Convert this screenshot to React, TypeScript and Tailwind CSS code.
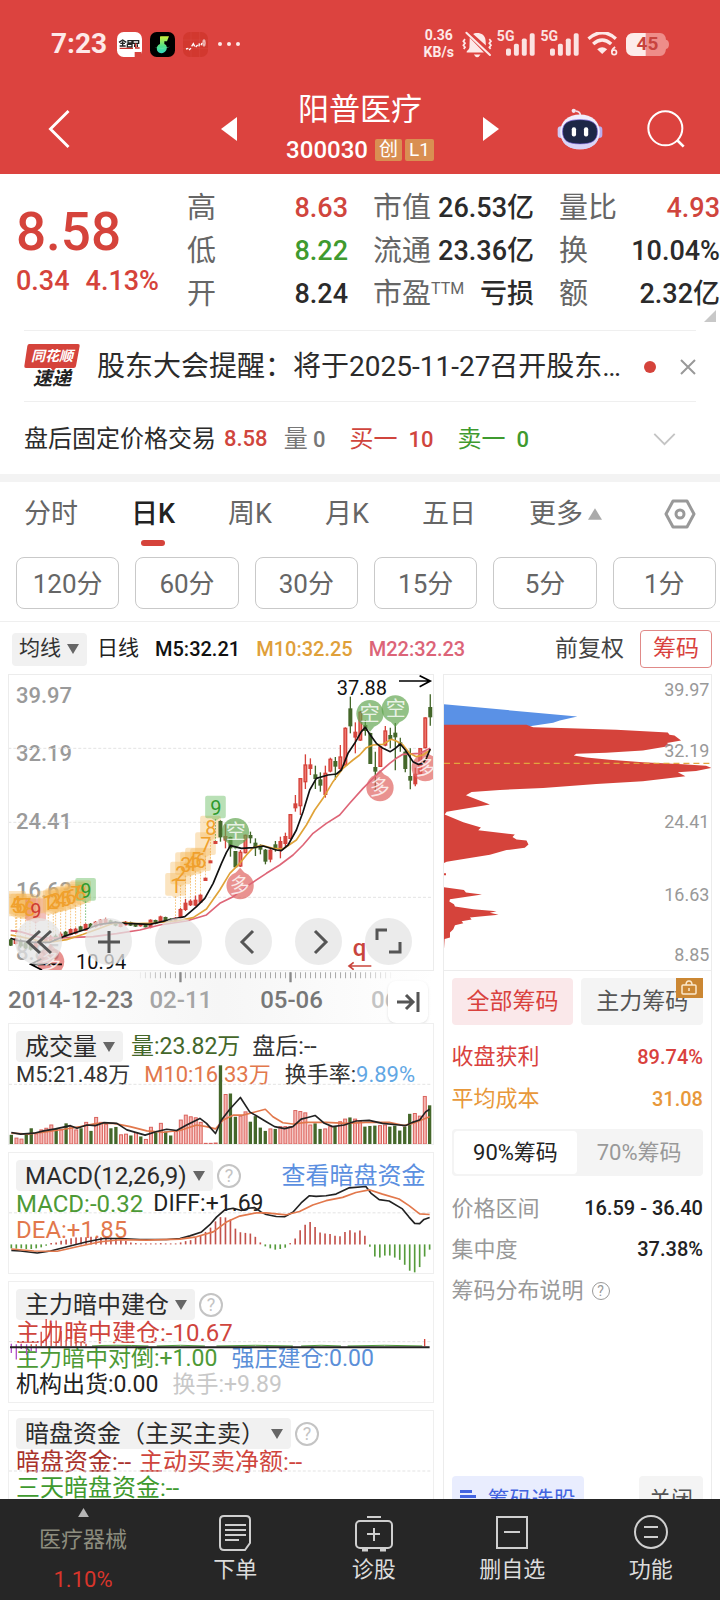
import React from 'react';

const UP = '#d5433b';
const DOWN = '#44672a';

const quotes = [
  { label: '高', value: '8.63', color: 'text-[#d0453d]' },
  { label: '市值', value: '26.53亿', color: 'text-[#2b2b2b]' },
  { label: '量比', value: '4.93', color: 'text-[#d0453d]' },
  { label: '低', value: '8.22', color: 'text-[#3f9a2f]' },
  { label: '流通', value: '23.36亿', color: 'text-[#2b2b2b]' },
  { label: '换', value: '10.04%', color: 'text-[#2b2b2b]' },
  { label: '开', value: '8.24', color: 'text-[#2b2b2b]' },
  { label: '市盈', sup: 'TTM', value: '亏损', color: 'text-[#2b2b2b]' },
  { label: '额', value: '2.32亿', color: 'text-[#2b2b2b]' },
];

const periods = ['分时', '日K', '周K', '月K', '五日'];
const minutes = ['120分', '60分', '30分', '15分', '5分', '1分'];

// [up, wick top, body top, body bottom, wick bottom], one candle every 15 units
const candles: [number, number, number, number, number][] = [
  [0, 820, 825, 840, 843], [1, 818, 822, 835, 838], [0, 822, 828, 842, 848], [0, 828, 834, 848, 852],
  [0, 832, 838, 852, 857], [1, 828, 832, 846, 850], [1, 820, 826, 838, 842], [1, 812, 818, 832, 836],
  [1, 810, 816, 828, 832], [0, 808, 814, 824, 828], [1, 802, 808, 820, 824], [0, 798, 802, 812, 816],
  [1, 790, 794, 808, 811], [1, 788, 793, 804, 808], [0, 783, 786, 796, 799], [1, 775, 779, 795, 797],
  [0, 774, 778, 786, 790], [1, 768, 772, 784, 788], [1, 762, 766, 780, 784], [1, 758, 764, 774, 778],
  [0, 764, 768, 776, 780], [0, 768, 772, 780, 784], [1, 772, 776, 784, 787], [1, 768, 772, 779, 782],
  [0, 770, 774, 780, 783], [0, 774, 777, 783, 786], [1, 774, 777, 782, 785], [0, 775, 778, 785, 787],
  [1, 763, 766, 785, 790], [0, 764, 767, 775, 778], [1, 752, 756, 769, 772], [0, 755, 758, 766, 769],
  [0, 760, 763, 769, 772], [1, 756, 760, 767, 770], [1, 729, 734, 756, 760], [1, 702, 715, 733, 738],
  [1, 703, 709, 719, 723], [1, 692, 706, 720, 724], [1, 688, 691, 711, 713], [1, 640, 640, 646, 646],
  [1, 588, 588, 593, 593], [1, 530, 530, 535, 535], [0, 466, 470, 515, 530], [1, 478, 515, 525, 550],
  [0, 515, 518, 548, 575], [0, 558, 560, 605, 607], [1, 555, 562, 603, 606], [1, 509, 511, 563, 565],
  [0, 500, 512, 518, 535], [0, 520, 535, 548, 573], [0, 538, 545, 552, 568], [0, 552, 556, 588, 598],
  [1, 548, 556, 582, 592], [0, 528, 540, 552, 560], [1, 515, 530, 555, 580], [1, 503, 515, 535, 545],
  [1, 447, 449, 520, 523], [1, 390, 417, 428, 440], [1, 339, 341, 422, 450], [1, 268, 300, 350, 372],
  [1, 280, 300, 310, 330], [0, 302, 330, 340, 372], [0, 322, 345, 360, 380], [1, 302, 325, 388, 398],
  [1, 278, 283, 318, 322], [0, 276, 290, 303, 345], [1, 240, 276, 310, 318], [1, 187, 190, 300, 305],
  [0, 95, 132, 182, 205], [1, 172, 202, 216, 265], [1, 138, 142, 225, 228], [0, 165, 182, 196, 212],
  [0, 203, 206, 295, 297], [0, 260, 308, 318, 376], [1, 243, 246, 304, 306], [1, 183, 198, 240, 244],
  [0, 188, 212, 222, 250], [0, 174, 205, 215, 316], [0, 218, 234, 240, 260], [0, 258, 262, 310, 322],
  [0, 250, 335, 345, 373], [1, 308, 328, 356, 364], [1, 249, 251, 325, 328], [1, 157, 159, 248, 250],
  [0, 88, 128, 155, 182],
];

const ma5 =
  '32,820 50,826 100,832 150,832 190,815 230,802 260,792 300,778 345,772 380,775 450,778 520,762 555,755 590,725 615,700 640,655 665,595 680,562 692,542 725,550 760,548 790,543 830,555 845,557 865,540 890,495 910,440 930,375 950,340 985,330 1010,327 1025,315 1045,265 1065,235 1085,200 1097,187 1112,210 1130,235 1150,250 1172,260 1187,250 1202,237 1217,255 1240,290 1255,298 1270,295 1280,280 1292,252';
const ma10 =
  '32,810 60,815 120,828 160,830 200,824 250,808 300,790 340,775 370,773 410,776 460,774 530,768 580,758 620,732 660,675 690,625 720,595 740,570 760,548 785,541 820,550 850,552 890,525 920,480 945,435 970,400 1000,350 1030,310 1060,285 1080,270 1100,248 1120,240 1150,238 1175,223 1190,228 1210,240 1230,265 1250,275 1270,270 1292,255';
const ma22 =
  '32,797 60,800 130,820 200,818 280,815 350,806 420,795 480,780 560,768 620,750 660,715 700,695 750,658 800,625 840,600 880,570 910,540 940,505 980,475 1020,450 1050,415 1090,370 1130,330 1170,295 1190,280 1210,268 1260,265 1292,250';

// nine-count marks: [digit, x, y, tone, stem bottom]
const marks: [string, number, number, string, number][] = [
  ['4', 47, 716, 'o', 818], ['5', 50, 724, 'o', 820], ['6', 62, 724, 'o', 824], ['7', 77, 724, 'o', 826],
  ['8', 90, 732, 'o', 832], ['9', 107, 738, 'r', 828], ['1', 145, 715, 'o', 812], ['2', 160, 712, 'o', 808],
  ['3', 167, 708, 'o', 806], ['4', 182, 704, 'o', 802], ['5', 197, 702, 'o', 798], ['6', 212, 696, 'o', 790],
  ['7', 227, 688, 'o', 788], ['8', 242, 684, 'o', 783], ['9', 257, 677, 'g', 775],
  ['1', 527, 662, 'o', 756], ['2', 542, 628, 'o', 729], ['3', 557, 600, 'o', 702], ['4', 572, 598, 'o', 703],
  ['5', 587, 586, 'o', 692], ['6', 602, 588, 'o', 688], ['7', 617, 540, 'o', 640], ['8', 632, 490, 'o', 588],
  ['9', 647, 430, 'g', 530],
];
const markTone: Record<string, { box: string; text: string }> = {
  o: { box: '#f5b75a', text: '#f0a02c' },
  r: { box: '#e0685f', text: '#cf3a32' },
  g: { box: '#58b552', text: '#2f9a2c' },
};

const pins: [string, number, number, boolean][] = [
  ['空', 707, 500, false], ['空', 1111, 146, false], ['空', 1187, 132, false],
  ['多', 721, 662, true], ['多', 1141, 368, true], ['多', 1277, 308, true], ['多', 152, 890, true],
];

// negative = green bar
const volumes = [
  -360, 370, 373, -357, -340, 357, 345, 340, 330, -340, 345, -325, 335, 345, -340, 322, -348, 307, 322, 328,
  -340, -336, 360, 358, -362, 353, -365, 374, 337, -352, 325, -350, -362, 350, 315, 300, 305, 308, 322, 386,
  386, 385, -148, 237, -234, -305, 303, 290, -320, -303, -338, -348, 342, -342, 335, 335, 335, 286, 289, 293,
  330, -325, -342, 342, 335, -335, 320, 312, -307, 312, 320, -335, -333, -332, 332, 330, -335, -332, -347, -335,
  -296, 295, 303, 243, -270,
];
const volMa5 =
  '32,353 60,358 100,355 130,348 165,342 210,332 230,340 260,330 285,332 310,323 350,325 380,345 435,361 470,350 500,343 530,347 560,330 600,310 620,325 647,356 665,315 690,282 722,246 750,290 770,302 800,320 825,335 855,341 880,335 905,312 925,307 947,301 975,325 1000,335 1035,330 1070,318 1110,316 1150,325 1200,330 1220,332 1240,322 1262,315 1280,290 1292,282';
const volMa10 =
  '32,355 80,358 130,352 190,343 240,335 290,325 340,325 390,335 440,348 490,352 540,347 590,330 620,335 647,342 670,315 700,300 730,300 760,292 797,282 820,305 850,323 880,327 920,322 980,322 1040,325 1100,322 1170,322 1215,332 1250,322 1292,305';

const macd = [
  700, 701, 700, 702, 702, 700, 697, 692, 684, 682, 677, 673, 669, 667, 666, 666, 665, 666, 666, 667, 668, 670,
  673, 678, 682, 684, 685, 685, 685, 685, 684, 685, 685, 685, 682, 678, 675, 668, 660, 650, 637, 618, 605, 606,
  612, 640, 651, 653, 655, 665, 682, 694, 700, 704, 702, 698, 684, 670, 645, 628, 620, 635, 652, 655, 656, 662,
  663, 650, 645, 652, 646, 662, 695, 725, 728, 722, 722, 728, 735, 750, 768, 773, 757, 725, 704,
];
const diff =
  '32,706 60,708 110,714 150,708 200,695 260,680 310,670 360,670 420,673 500,673 540,670 570,662 605,650 630,628 650,605 675,583 700,578 725,585 745,578 765,576 785,590 800,597 830,603 855,604 880,590 905,562 930,540 950,542 980,540 1010,535 1050,516 1100,512 1115,532 1140,552 1170,556 1210,580 1230,605 1247,624 1262,625 1275,612 1292,606';
const dea =
  '32,702 100,708 170,709 230,695 300,680 360,674 440,675 540,672 590,665 640,650 680,620 720,602 770,592 800,592 860,598 900,588 940,568 980,555 1030,545 1070,530 1110,522 1150,535 1200,550 1230,570 1262,595 1292,597';

const Triangle: React.FC<{ className: string; up?: boolean }> = ({ className, up }) => (
  <svg viewBox="0 0 12 10" className={className} fill="currentColor" aria-hidden="true">
    <path d={up ? 'M6 0L12 10H0Z' : 'M0 0H12L6 10Z'} />
  </svg>
);

const Signal = () => (
  <div className="flex items-center text-[#fbe3e2]">
    <span className="-mr-2 -mt-4 text-[14px] leading-[16px] font-bold">5G</span>
    <svg viewBox="0 0 88 68" className="h-[23px] w-[29px]" fill="currentColor">
      <rect x="0" y="46" width="15" height="22" rx="5" />
      <rect x="24" y="32" width="15" height="36" rx="5" />
      <rect x="48" y="16" width="15" height="52" rx="5" />
      <rect x="72" y="0" width="15" height="68" rx="5" />
    </svg>
  </div>
);

const StatusBar = () => (
  <div className="flex h-[88px] items-center pr-[51px] pl-[51px] text-[#fde9e8]">
    <span className="text-[28px] leading-[32px] font-bold">7:23</span>
    <svg viewBox="0 0 75 75" className="ml-[10px] h-[25px] w-[25px]">
      <rect width="75" height="75" rx="20" fill="#fff" />
      <path d="M6 31l11-7 11 7M10 34h14M8 42h18M17 28v14M33 26h12v7H33zM31 37h14v8H31zM48 26h17v8H48zM53 37v8M61 37v8" fill="none" stroke="#222" strokeWidth="4" />
      <path d="M8 49h40M56 34v14h12" fill="none" stroke="#c8322c" strokeWidth="4" />
      <path d="M53 60h20v15H53z" fill="#d8433d" />
    </svg>
    <svg viewBox="0 0 75 75" className="ml-2 h-[25px] w-[25px]">
      <defs>
        <linearGradient id="flask" x1="0" y1="0" x2="0" y2="1">
          <stop offset="0" stopColor="#c9f03c" />
          <stop offset="0.6" stopColor="#4fe08a" />
          <stop offset="1" stopColor="#35d8c0" />
        </linearGradient>
      </defs>
      <rect width="75" height="75" rx="20" fill="#000" />
      <path d="M32 13h25l-6 15H43v8c8 3 9 12 6 18-5 12-23 13-28 1-2-8 1-16 9-19V14z" fill="url(#flask)" />
      <path d="M14 46l20 2 26-4-24 8z" fill="#5ee2a0" />
    </svg>
    <svg viewBox="0 0 75 75" className="ml-2 h-[25px] w-[25px]">
      <rect width="75" height="75" rx="20" fill="#d2382f" />
      <path d="M0 24h75M0 50h75M24 0v75M50 0v75" stroke="#de5148" strokeWidth="1" />
      <path d="M9 51l7-2M18 54l6-5M26 43l5-8 4 8M38 45l6-6M48 43l1-9M54 40l3-7" fill="none" stroke="#fff" strokeWidth="4" />
      <ellipse cx="63" cy="33" rx="3" ry="10" fill="none" stroke="#fff" strokeWidth="3" />
    </svg>
    <svg viewBox="0 0 66 12" className="ml-[10px] h-1 w-[22px]" fill="currentColor">
      <circle cx="6" cy="6" r="6" />
      <circle cx="33" cy="6" r="6" />
      <circle cx="60" cy="6" r="6" />
    </svg>

    <span className="ml-auto text-center text-[14px] leading-[17px] font-bold">
      0.36
      <br />
      KB/s
    </span>
    <svg viewBox="185 28 92 80" className="ml-2 h-[27px] w-[31px]" fill="currentColor">
      <path d="M218 37c3-4 20-6 29 2 10 9 8 22 9 32zM208 48l42 44H199c-2-6 8-8 8-16zM220 98h20q-10 16-20 0z" />
      <path d="M198 33l70 66" stroke="currentColor" strokeWidth="6" strokeLinecap="round" />
      <path d="M194 52l-5 6 5 6-5 6 5 6-4 5M266 52l5 6-5 6 5 6-5 6 4 5" fill="none" stroke="currentColor" strokeWidth="5" />
    </svg>
    <div className="ml-1 flex gap-[5px]">
      <Signal />
      <Signal />
    </div>
    <svg viewBox="562 38 92 72" className="ml-2 h-6 w-[31px]" fill="none" stroke="currentColor">
      <path d="M566 58q42-36 82 0" strokeWidth="10" />
      <path d="M580 74q27-24 54 0" strokeWidth="10" />
      <path d="M607 104l-15-14q15-12 30 0z" fill="currentColor" stroke="none" />
      <path d="M646 83q-10 6-10 15" strokeWidth="5" />
      <circle cx="643" cy="99" r="7" strokeWidth="5" />
    </svg>
    <div className="relative ml-2 flex h-[23px] w-[43px] items-center justify-center">
      <svg viewBox="0 0 129 69" className="absolute inset-0 h-full w-full">
        <path d="M24 0h78q16 0 18 20 9 2 9 14t-9 14q-2 21-18 21H24Q0 69 0 45V24Q0 0 24 0z" fill="#ee8d89" />
        <path d="M59 0H24Q0 0 0 24v21q0 24 24 24h35z" fill="#fdecea" />
      </svg>
      <span className="relative text-[19px] leading-[22px] font-bold text-[#c8433e]">45</span>
    </div>
  </div>
);

const TitleBar = () => (
  <div className="grid h-[86px] grid-cols-[1fr_auto_1fr] items-center pb-1">
    <button className="ml-[47px] w-[24px]" aria-label="返回">
      <svg viewBox="0 0 24 42" className="h-[40px] w-[24px]" fill="none" stroke="#fff" strokeWidth="3">
        <path d="M22 2L3 21l19 19" />
      </svg>
    </button>
    <div className="flex w-[278px] items-center justify-between">
      <button aria-label="上一只">
        <svg viewBox="0 0 16 24" className="h-6 w-4" fill="#fff">
          <path d="M16 0v24L0 12z" />
        </svg>
      </button>
      <div className="flex flex-col items-center gap-[10px] pb-1">
        <h1 className="text-[31px] leading-[36px]">阳普医疗</h1>
        <div className="flex h-6 items-center gap-[3px]">
          <span className="mr-1 text-[24px] leading-6 font-medium">300030</span>
          <span className="rounded-xs bg-[#d98f52] px-1 text-[19px] leading-[22px]">创</span>
          <span className="rounded-xs bg-[#d98f52] px-1 text-[19px] leading-[22px]">L1</span>
        </div>
      </div>
      <button aria-label="下一只">
        <svg viewBox="0 0 16 24" className="h-6 w-4" fill="#fff">
          <path d="M0 0v24l16-12z" />
        </svg>
      </button>
    </div>
    <div className="flex items-center justify-end gap-11 pr-[35px]">
      <button aria-label="助手">
        <svg viewBox="470 260 140 127" className="h-[42px] w-[46px]">
          <path d="M541 282q0-12-14-13" fill="none" stroke="#f3dfe9" strokeWidth="5" />
          <circle cx="521" cy="268" r="6.500" fill="#f3e4ee" />
          <rect x="472" y="315" width="20" height="36" rx="10" fill="#cfc9f3" />
          <rect x="588" y="315" width="20" height="36" rx="10" fill="#b9aef0" />
          <path d="M540 279c36 0 60 22 60 52 0 34-24 54-60 54s-60-20-60-54c0-30 24-52 60-52z" fill="#f0edfb" />
          <path d="M540 385c-30 0-50-12-57-36 14 14 30 22 57 22s44-8 57-22c-7 24-27 36-57 36z" fill="#d9d4f6" />
          <path d="M540 295c32 0 53 8 53 36s-16 38-53 38-53-10-53-38 21-36 53-36z" fill="#1e2747" stroke="#6f5bd8" strokeWidth="2" />
          <rect x="515" y="318" width="13" height="28" rx="6" fill="#fff" />
          <rect x="552" y="318" width="13" height="28" rx="6" fill="#fff" />
        </svg>
      </button>
      <button aria-label="搜索">
        <svg viewBox="0 0 114 114" className="h-[38px] w-[38px]" fill="none" stroke="#fff" strokeWidth="6">
          <circle cx="55" cy="55" r="51" />
          <path d="M90 90l20 20" strokeWidth="8" />
        </svg>
      </button>
    </div>
  </div>
);

const QuotePanel = () => (
  <section className="relative flex pt-[2px] pb-[14px]">
    <div className="w-[187px] shrink-0 pt-[26px] pl-4 text-[#d5433b]">
      <div className="text-[53px] leading-[60px] font-medium">8.58</div>
      <div className="flex gap-4 pt-[3px] text-[27px] leading-[32px] font-medium">
        <span>0.34</span>
        <span>4.13%</span>
      </div>
    </div>
    <dl className="grid flex-1 grid-cols-3 gap-x-[25px] pt-[11px]">
      {quotes.map((q) => (
        <div key={q.label} className="flex h-[43px] items-center justify-between whitespace-nowrap">
          <dt className="flex text-[29px] leading-[43px] text-[#666]">
            {q.label}
            {q.sup && <sup className="top-0 text-[16px] leading-[32px]">{q.sup}</sup>}
          </dt>
          <dd className={`text-[27px] leading-[43px] font-medium ${q.color}`}>{q.value}</dd>
        </div>
      ))}
    </dl>
    <svg viewBox="0 0 12 12" className="absolute right-1 bottom-2 h-3 w-3" fill="#c8c8c8">
      <path d="M12 0v12H0z" />
    </svg>
  </section>
);

const NewsRow = () => (
  <section className="mx-6 flex h-[72px] items-center border-y border-[#efefef] pt-[2px]">
    <div className="relative w-14 shrink-0 text-center font-bold italic">
      <svg viewBox="0 0 168 81" className="absolute top-0 left-0 h-[27px] w-14" fill={UP}>
        <path d="M16 0H162q6 0 5 6L156 66q-1 6-7 6H96l-8 9-8-9H6q-6 0-5-6L10 6q1-6 6-6z" />
      </svg>
      <div className="relative text-[14px] leading-6 text-white">同花顺</div>
      <div className="text-[19px] leading-[22px] text-[#222]">速递</div>
    </div>
    <a href="#news" className="ml-[17px] flex-1 truncate text-[28px] leading-[40px] text-[#2b2b2b]">
      股东大会提醒：将于2025-11-27召开股东…
    </a>
    <span className="mr-6 ml-4 h-3 w-3 shrink-0 rounded-full bg-[#d5433b]" />
    <button aria-label="关闭提醒">
      <svg viewBox="0 0 16 16" className="h-4 w-4" fill="none" stroke="#999" strokeWidth="2">
        <path d="M1 1l14 14M15 1L1 15" />
      </svg>
    </button>
  </section>
);

const AfterHours = () => (
  <section className="flex h-[72px] items-center px-6 pt-[2px] text-[22px] leading-[32px] font-medium">
    <span className="text-[24px] font-normal text-[#2b2b2b]">盘后固定价格交易</span>
    <span className="ml-2 text-[#d0453d]">8.58</span>
    <span className="ml-4 text-[#777]">
      <span className="text-[24px] font-normal">量</span> 0
    </span>
    <span className="ml-6 text-[#d0453d]">
      <span className="text-[24px] font-normal">买一</span>&nbsp; 10
    </span>
    <span className="ml-6 text-[#3f9a2f]">
      <span className="text-[24px] font-normal">卖一</span>&nbsp; 0
    </span>
    <button className="mr-5 ml-auto" aria-label="展开">
      <svg viewBox="0 0 24 14" className="h-[13px] w-[23px]" fill="none" stroke="#c4c4c4" strokeWidth="2">
        <path d="M1 1l11 11L23 1" />
      </svg>
    </button>
  </section>
);

const PeriodTabs = () => (
  <nav className="flex h-[67px] items-center gap-[53px] px-6 pb-1 text-[27px] leading-[40px] whitespace-nowrap text-[#666]">
    {periods.map((p) =>
      p === '日K' ? (
        <button key={p} className="relative font-medium text-[#222]">
          {p}
          <span className="absolute -bottom-[12px] left-1/2 h-[6px] w-6 -translate-x-1/2 rounded-full bg-[#d5433b]" />
        </button>
      ) : (
        <button key={p}>{p}</button>
      ),
    )}
    <button className="flex items-center gap-[5px]">
      更多
      <Triangle up className="h-3 w-[14px] text-[#aaa]" />
    </button>
    <button className="ml-auto" aria-label="设置">
      <svg viewBox="0 0 32 30" className="h-[30px] w-8" fill="none" stroke="#999" strokeWidth="3" strokeLinejoin="round">
        <path d="M9 2h14l7 13-7 13H9L2 15z" />
        <circle cx="16" cy="15" r="4" />
      </svg>
    </button>
  </nav>
);

const MinuteTabs = () => (
  <div className="flex gap-4 border-b border-[#efefef] pt-2 pr-1 pb-3 pl-4">
    {minutes.map((m) => (
      <button key={m} className="h-[52px] flex-1 rounded-lg border border-[#c9c9c9] pt-[2px] text-[26px] text-[#666]">
        {m}
      </button>
    ))}
  </div>
);

const MaRow = () => (
  <div className="flex h-[52px] items-center pt-[2px] pr-2 pl-3 text-[20px] font-medium">
    <Dropdown label="均线" options={['均线', '布林']} small />
    <span className="ml-[10px] text-[21px] font-normal text-[#222]">日线</span>
    <span className="ml-4 text-[#111]">M5:32.21</span>
    <span className="ml-4 text-[#dfa03a]">M10:32.25</span>
    <span className="ml-4 text-[#dc6478]">M22:32.23</span>
    <button className="ml-auto text-[23px] font-normal text-[#444]">前复权</button>
    <button className="ml-4 h-[38px] w-[72px] rounded-sm border border-[#e08a88] text-[23px] font-normal text-[#d9413d]">
      筹码
    </button>
  </div>
);

const Dropdown: React.FC<{ label: string; options: string[]; small?: boolean }> = ({ label, options, small }) => (
  <label className="relative inline-flex items-center">
    <select
      aria-label={label}
      className={
        small
          ? 'h-[33px] appearance-none rounded-sm bg-[#f1f1f1] pr-[26px] pl-[7px] text-[21px] font-normal text-[#333]'
          : 'h-[31px] appearance-none rounded-sm bg-[#f1f1f1] pr-[26px] pl-[9px] text-[24px] leading-[30px] text-[#2b2b2b]'
      }
    >
      {options.map((o) => (
        <option key={o}>{o}</option>
      ))}
    </select>
    <Triangle className="pointer-events-none absolute right-[8px] h-[10px] w-3 text-[#666]" />
  </label>
);

const HelpButton = () => (
  <button
    aria-label="说明"
    className="ml-1 h-6 w-6 shrink-0 rounded-full border-2 border-[#c4c4c4] text-[18px] leading-[20px] text-[#c4c4c4]"
  >
    ?
  </button>
);

const GridLine: React.FC<{ y: number }> = ({ y }) => (
  <path d={`M25 ${y}H1300`} stroke="#e3e3e3" strokeWidth="3" strokeDasharray="9 6" />
);

const KChart = () => (
  <div className="relative h-[297px] overflow-hidden border border-[#ececec]">
    <svg viewBox="0 0 424 295" preserveAspectRatio="none" className="block h-full w-full">
      <g fontSize="22" fontWeight="500" fill="#9a9a9a">
        <text x="7" y="28">39.97</text>
        <text x="7" y="86">32.19</text>
        <text x="7" y="154">24.41</text>
        <text x="7" y="223">16.63</text>
        <text x="7" y="285">8.85</text>
      </g>
      <g transform="translate(-9 -10) scale(0.33333)">
        <GridLine y={250} />
        <GridLine y={472} />
        <GridLine y={697} />
        {marks.map(([n, x, y, tone, stem], i) => (
          <g key={i}>
            <path d={`M${x} ${y + 32}V${stem}`} stroke={markTone[tone].text} strokeWidth="2.500" strokeDasharray="5 4" opacity="0.700" />
            <path
              d={`M${x - 25} ${y - 38}h50q6 0 6 6v56q0 6-6 6H${x + 12}l-12 8-12-8H${x - 25}q-6 0-6-6v-56q0-6 6-6z`}
              fill={markTone[tone].box}
              opacity={tone === 'o' ? 0.38 : 0.42}
            />
          </g>
        ))}
        {candles.map(([up, wt, bt, bb, wb], i) => {
          const x = 32 + i * 15;
          const color = up ? UP : DOWN;
          return (
            <g key={i}>
              <path d={`M${x} ${wt}V${wb}`} stroke={color} strokeWidth="4" />
              <rect x={x - 4} y={bt} width="8" height={bb - bt} fill={up && bb - bt > 30 ? '#f0776f' : color} stroke={color} strokeWidth="4" />
            </g>
          );
        })}
        {pins.map(([, x, y, up], i) => (
          <g key={i} fill={up ? '#e0605c' : '#5fa54e'} opacity="0.680">
            <circle cx={x} cy={y} r="41" />
            <path d={up ? `M${x - 14} ${y - 38}L${x} ${y - 54}l14 16z` : `M${x - 14} ${y + 38}L${x} ${y + 54}l14-16z`} />
          </g>
        ))}
        <g fill="none" strokeWidth="5" strokeLinejoin="round">
          <polyline points={ma22} stroke="#de6577" />
          <polyline points={ma10} stroke="#e0a338" />
          <polyline points={ma5} stroke="#111" />
        </g>
        <g fill="none" stroke="#000" strokeWidth="5">
          <path d="M1198 48h92M1260 32l32 16-32 17M186 898H94M124 882l-32 16 34 17" />
        </g>
        <path d="M1115 903h-66M1062 892l-14 11 14 11" fill="none" stroke="#c9453d" strokeWidth="5" />
      </g>
      <g fontSize="20" textAnchor="middle">
        {marks.map(([n, x, y, tone], i) => (
          <text key={i} x={Math.round(x / 3 - 9)} y={Math.round(y / 3 - 3)} fill={markTone[tone].text}>
            {n}
          </text>
        ))}
      </g>
      <g fontSize="20" textAnchor="middle" fill="#fff" opacity="0.800">
        {pins.map(([t, x, y], i) => (
          <text key={i} x={Math.round(x / 3 - 9)} y={Math.round(y / 3 - 3)}>
            {t}
          </text>
        ))}
      </g>
      <g fontSize="20" fill="#111">
        <text x="328" y="20">37.88</text>
        <text x="67" y="294">10.94</text>
      </g>
      <text x="344" y="281" fontSize="24" fontWeight="500" fill="#c9453d">q</text>
    </svg>
    <div className="absolute bottom-[5px] left-[6px] flex gap-[23px]">
      {[
        ['快退', 'M25 13L13 24l12 11M36 13L24 24l12 11'],
        ['放大', 'M13 24h22M24 13v22'],
        ['缩小', 'M13 24h22'],
        ['左移', 'M28 13L17 24l11 11'],
        ['右移', 'M20 13l11 11-11 11'],
        ['全屏', 'M12 22v-10h10M24 34h11v-10'],
      ].map(([name, d]) => (
        <button key={name} aria-label={name} className="h-[47px] w-[47px] rounded-full bg-[#e4e4e4]/75">
          <svg viewBox="0 0 47 47" className="h-full w-full" fill="none" stroke="#555" strokeWidth="3">
            <path d={d} />
          </svg>
        </button>
      ))}
    </div>
  </div>
);

const Timeline = () => (
  <div className="relative h-[52px] overflow-hidden bg-linear-to-r from-white via-[#f6f6f6] to-white">
    <svg viewBox="25 916 1276 36" preserveAspectRatio="none" className="block h-3 w-full" fill="none" stroke="#a8a8a8">
      {Array.from({ length: 51 }, (_, i) => (
        <path key={i} d={`M${422 + i * 15} 920v18`} strokeWidth="3" opacity={Math.min(1, (i + 1) / 6, (51 - i) / 8)} />
      ))}
      <path d="M542 920v30M872 920v30" stroke="#888" strokeWidth="7" />
    </svg>
    <div className="flex text-[24px] leading-[34px] font-medium whitespace-nowrap text-[#777]">
      <span>2014-12-23</span>
      <span className="ml-4 text-[#a5a5a5]">02-11</span>
      <span className="ml-12">05-06</span>
      <span className="ml-12 text-[#c4c4c4]">06</span>
    </div>
    <button aria-label="最新" className="absolute right-[6px] bottom-0 flex h-[42px] w-10 items-center justify-center rounded-lg bg-white shadow">
      <svg viewBox="0 0 24 24" className="h-6 w-6" fill="none" stroke="#555" strokeWidth="3">
        <path d="M1 12h15M10 5l7 7-7 7M22 2v20" />
      </svg>
    </button>
  </div>
);

const Panel: React.FC<{ children: React.ReactNode; chart?: React.ReactNode }> = ({ children, chart }) => (
  <section className="relative h-[122px] overflow-hidden border border-[#efefef] px-[7px] pt-[7px] text-[23px] leading-[26px] whitespace-nowrap">
    {children}
    {chart}
  </section>
);

const chartClass = 'pointer-events-none absolute inset-0 h-full w-full';

const VolumePanel = () => (
  <Panel
    chart={
      <svg viewBox="25 22 1276 366" preserveAspectRatio="none" className={chartClass}>
        <GridLine y={206} />
        {volumes.map((v, i) => {
          const top = Math.abs(v);
          return v < 0 ? (
            <rect key={i} x={27 + i * 15} y={top} width="10" height={390 - top} fill={DOWN} />
          ) : (
            <rect key={i} x={28 + i * 15} y={top} width="9" height={388 - top} fill="#f6b5b1" stroke="#d9625c" strokeWidth="3" />
          );
        })}
        <g fill="none" strokeWidth="5" strokeLinejoin="round">
          <polyline points={volMa10} stroke="#e2784c" />
          <polyline points={volMa5} stroke="#222" />
        </g>
      </svg>
    }
  >
    <div className="flex h-[31px] items-center">
      <Dropdown label="副图指标一" options={['成交量', '成交额']} />
      <span className="ml-2 text-[#44672a]">量:23.82万</span>
      <span className="ml-3 text-[#333]">盘后:--</span>
    </div>
    <div className="flex gap-[14px] text-[22px]">
      <span className="text-[#333]">M5:21.48万</span>
      <span className="text-[#e2784c]">M10:16.33万</span>
      <span className="text-[#333]">
        换手率:<span className="text-[#62a7e4]">9.89%</span>
      </span>
    </div>
  </Panel>
);

const MacdPanel = () => (
  <Panel
    chart={
      <svg viewBox="25 410 1276 365" preserveAspectRatio="none" className={chartClass}>
        <GridLine y={592} />
        {macd.map((v, i) => (
          <path key={i} d={`M${32 + i * 15} 688V${v}`} stroke={v < 688 ? '#c3524c' : '#569b3c'} strokeWidth="5" />
        ))}
        <g fill="none" strokeWidth="5" strokeLinejoin="round">
          <polyline points={diff} stroke="#222" />
          <polyline points={dea} stroke="#e2784c" />
        </g>
      </svg>
    }
  >
    <div className="flex h-[31px] items-center">
      <Dropdown label="副图指标二" options={['MACD(12,26,9)', 'KDJ']} />
      <HelpButton />
      <a href="#dark" className="ml-auto text-[24px] text-[#5b8fe0]">
        查看暗盘资金
      </a>
    </div>
    <div className="flex gap-[10px]">
      <span className="text-[24px] text-[#4d9a36]">MACD:-0.32</span>
      <span className="text-[#222]">DIFF:+1.69</span>
    </div>
    <div className="text-[24px] text-[#e2784c]">DEA:+1.85</div>
  </Panel>
);

const BuildPanel = () => (
  <Panel
    chart={
      <svg viewBox="25 33 1276 364" preserveAspectRatio="none" className={chartClass} fill="none">
        <GridLine y={214} />
        <path
          d="M62 220v8M92 222v6M107 222v6M122 184v44M137 145v83M152 158v70M167 150v78M182 182v46M197 208v20M212 162v66M227 178v50M242 215v13M257 220v8M1277 206v22"
          stroke="#d5433b"
          strokeWidth="4"
        />
        <path d="M32 220v28M47 222v46M62 222v14M78 222v32M92 232v10M107 232v14" stroke="#b04fc8" strokeWidth="4" />
        <path d="M275 227q60-4 170 0M470 227q70-4 145 0M650 227q120-4 230 0M905 227q60-4 120 0M1045 227q110-4 225 0" stroke="#4d9a36" strokeWidth="3" />
        <path d="M28 231H1292" stroke="#222" strokeWidth="6" />
      </svg>
    }
  >
    <div className="flex h-[31px] items-center">
      <Dropdown label="副图指标三" options={['主力暗中建仓', '主力动向']} />
      <HelpButton />
    </div>
    <div className="text-[24px] text-[#cf453d]">主力暗中建仓:-10.67</div>
    <div className="flex gap-[14px]">
      <span className="text-[#4d9a36]">主力暗中对倒:+1.00</span>
      <span className="text-[#5b8fd8]">强庄建仓:0.00</span>
    </div>
    <div className="flex gap-[14px]">
      <span className="text-[#222]">机构出货:0.00</span>
      <span className="text-[#c8c8c8]">换手:+9.89</span>
    </div>
  </Panel>
);

const DarkPanel = () => (
  <Panel
    chart={
      <svg viewBox="25 420 1276 364" preserveAspectRatio="none" className={chartClass}>
        <GridLine y={602} />
      </svg>
    }
  >
    <div className="flex h-[31px] items-center">
      <Dropdown label="副图指标四" options={['暗盘资金（主买主卖）', '资金博弈']} />
      <HelpButton />
    </div>
    <div className="flex gap-2 text-[24px]">
      <span className="text-[#a9322c]">暗盘资金:--</span>
      <span className="text-[#cf453d]">主动买卖净额:--</span>
    </div>
    <div className="text-[24px] text-[#3f9a2f]">三天暗盘资金:--</div>
  </Panel>
);

const ChipChart = () => (
  <svg viewBox="0 0 268 296" preserveAspectRatio="none" className="block h-[296px] w-full border-b border-[#ececec]">
    <g transform="translate(-14 -10) scale(0.33333)">
      <path d="M42 118L443 155 390 167 370 174 300 184H42z" fill="#5a91e6" />
      <path
        d="M42 180L290 180 310 187 420 190 560 195 715 203 720 210 735 212 755 227 712 235 725 243 640 257 530 264 440 267 432 272 470 278 540 285 640 293 760 299 830 303 846 310 800 319 745 323 768 335 640 350 500 358 340 370 210 376 125 382 108 392 180 420 50 442 44 450 80 465 100 473 153 489 145 497 255 510 248 518 260 525 290 528 296 540 285 550 230 557 180 571 110 582 50 592 42 596z"
        fill={UP}
      />
      <path d="M42 627h6v6h-6zM42 669L102 677 108 685 156 691 60 705 58 712 72 720 75 727 130 735 200 741 180 746 206 752 150 757 120 760 125 766 95 771 100 777 75 783 70 795 60 805 60 820 44 825 42 855z" fill={UP} />
      <path d="M42 296H840" stroke="#e3a53c" strokeWidth="4" strokeDasharray="18 12" />
    </g>
    <g fontSize="18" fill="#999" textAnchor="end">
      <text x="266" y="21">39.97</text>
      <text x="266" y="82">32.19</text>
      <text x="266" y="154">24.41</text>
      <text x="266" y="227">16.63</text>
      <text x="266" y="287">8.85</text>
    </g>
  </svg>
);

const ChipPanel = () => (
  <aside className="border border-[#ececec] text-[22px] leading-[41px]">
    <ChipChart />
    <div className="px-2 pt-[7px]">
      <div className="grid grid-cols-2 gap-2 text-[23px] leading-[48px]">
        <button className="h-[47px] rounded-sm bg-[#fae8ea] text-[#d9413d]">全部筹码</button>
        <button className="relative h-[47px] rounded-sm bg-[#f4f4f4] text-[#555]">
          主力筹码
          <span className="absolute top-0 right-0 flex h-5 w-[27px] items-center justify-center bg-[#cb8733]">
            <svg viewBox="0 0 16 16" className="h-4 w-4" fill="none" stroke="#fbe9cd" strokeWidth="1.500">
              <rect x="1" y="5" width="14" height="9" rx="1" />
              <path d="M5 5q0-4 3-4t3 4M8 8v3" />
            </svg>
          </span>
        </button>
      </div>
      <dl className="pt-[11px] leading-[42px]">
        <div className="flex justify-between text-[#d9413d]">
          <dt>收盘获利</dt>
          <dd className="text-[20px] font-medium">89.74%</dd>
        </div>
        <div className="flex justify-between text-[#e8983a]">
          <dt>平均成本</dt>
          <dd className="text-[20px] font-medium">31.08</dd>
        </div>
      </dl>
      <div className="mt-[9px] grid h-[47px] grid-cols-2 rounded-sm bg-[#f4f4f4] p-[2px]">
        <button className="rounded-sm bg-white text-[#222]">90%筹码</button>
        <button className="text-[#999]">70%筹码</button>
      </div>
      <dl className="pt-3 text-[#999]">
        <div className="flex justify-between">
          <dt>价格区间</dt>
          <dd className="text-[20px] font-medium text-[#222]">16.59 - 36.40</dd>
        </div>
        <div className="flex justify-between">
          <dt>集中度</dt>
          <dd className="text-[20px] font-medium text-[#222]">37.38%</dd>
        </div>
      </dl>
      <div className="flex items-center gap-2 text-[#999]">
        筹码分布说明
        <button aria-label="筹码分布说明" className="h-[18px] w-[18px] rounded-full border border-[#999] text-[14px] leading-4">
          ?
        </button>
      </div>
      <div className="mt-[165px] flex justify-between leading-[47px]">
        <button className="flex items-center gap-[6px] rounded-sm bg-[#e9edfe] px-2 text-[#4364e0]">
          <svg viewBox="0 0 22 20" className="h-5 w-[22px]" fill="currentColor">
            <path d="M0 0h12v3H0zM0 5h16v3H0zM0 10h22v3H0zM0 15h14v3H0z" />
          </svg>
          筹码选股
        </button>
        <button className="rounded-sm bg-[#f4f4f4] px-[10px] text-[#555]">关闭</button>
      </div>
    </div>
  </aside>
);

const navItems = [
  {
    name: '下单',
    icon: (
      <>
        <path d="M7 2h22q4 0 4 4v23l-5 7H7q-4 0-4-4V6q0-4 4-4z" />
        <path d="M8 11h21M8 16h21M8 21h21M8 26h14" />
      </>
    ),
  },
  {
    name: '诊股',
    icon: (
      <>
        <rect x="0" y="7" width="36" height="27" rx="4" />
        <path d="M11 3h14M18 14v13M11 20h13" />
        <path d="M6 36h6M24 36h6" strokeWidth="3" />
      </>
    ),
  },
  {
    name: '删自选',
    icon: (
      <>
        <rect x="3" y="3" width="30" height="31" />
        <path d="M10 18h16" />
      </>
    ),
  },
  {
    name: '功能',
    icon: (
      <>
        <circle cx="18" cy="18" r="16" />
        <path d="M11 13h14M11 23h14" />
      </>
    ),
  },
];

const BottomNav = () => (
  <footer className="flex h-[101px] shrink-0 bg-[#262626] text-[22px] text-[#dcdcdc]">
    <a href="#sector" className="flex w-[166px] flex-col items-center pt-[9px] leading-[40px]">
      <Triangle up className="h-[10px] w-[17px] text-[#b5b5b5]" />
      <span className="pt-[3px] text-[#8d8d7e]">医疗器械</span>
      <span className="text-[#d9352b]">1.10%</span>
    </a>
    {navItems.map((item) => (
      <button key={item.name} className="flex flex-1 flex-col items-center pt-[15px]">
        <svg viewBox="-1 0 38 38" className="h-[38px] w-[38px]" fill="none" stroke="#cfcfcf" strokeWidth="2">
          {item.icon}
        </svg>
        <span className="pt-[2px] leading-[32px]">{item.name}</span>
      </button>
    ))}
  </footer>
);

const App: React.FC = () => (
  <div className="flex h-screen flex-col overflow-hidden bg-white font-['Roboto','Noto_Sans_CJK_SC',sans-serif]">
    <header className="shrink-0 bg-[#dc433f] text-white">
      <StatusBar />
      <TitleBar />
    </header>
    <main className="min-h-0 flex-1 overflow-hidden">
      <QuotePanel />
      <NewsRow />
      <AfterHours />
      <div className="h-2 bg-[#f3f3f3]" />
      <PeriodTabs />
      <MinuteTabs />
      <MaRow />
      <div className="grid grid-cols-[425fr_269fr] gap-x-[9px] pr-2 pl-2">
        <div className="min-w-0">
          <KChart />
          <Timeline />
          <div className="flex flex-col gap-[7px]">
            <VolumePanel />
            <MacdPanel />
            <BuildPanel />
            <DarkPanel />
          </div>
        </div>
        <ChipPanel />
      </div>
    </main>
    <BottomNav />
  </div>
);

export default App;
